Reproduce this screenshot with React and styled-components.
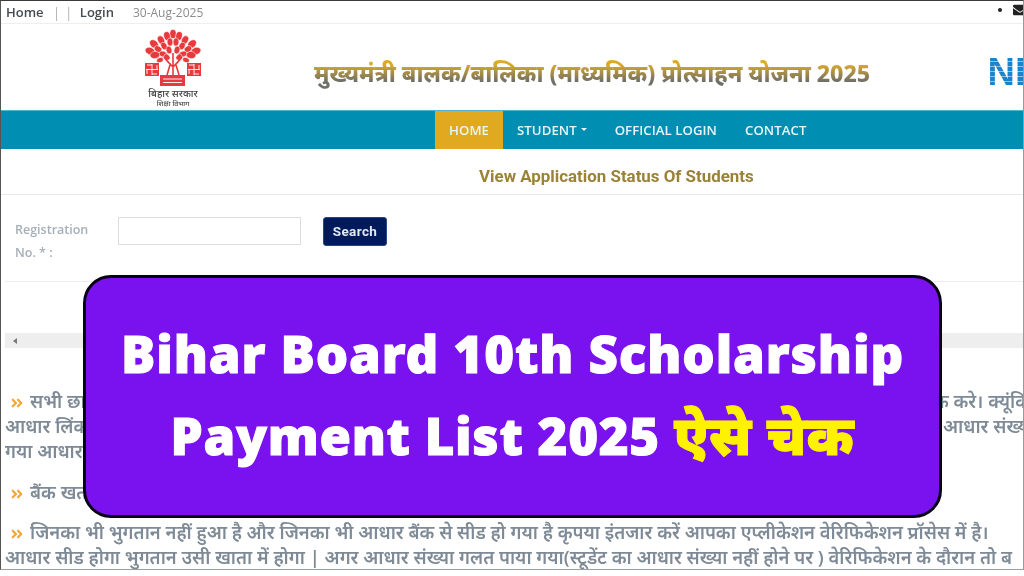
import React from 'react';
import styled, { createGlobalStyle } from 'styled-components';
import { FaEnvelope, FaAngleDoubleRight } from 'react-icons/fa';

const Global = createGlobalStyle`
  html, body { margin: 0; padding: 0; background: #fff; }
  body { width: 1024px; height: 576px; overflow: hidden; font-family: "Open Sans", "Noto Sans", sans-serif; }
`;

const Stage = styled.div`
  position: relative;
  width: 1024px;
  height: 576px;
  overflow: hidden;
`;

const Page = styled.div`
  box-sizing: border-box;
  width: 1024px;
  height: 570px;
  border-top: 1px solid #3a3a3a;
  border-left: 1px solid #555;
  border-right: 1px solid #999;
  border-bottom: 1px solid #9aa0a4;
  overflow: hidden;
  filter: blur(0.35px);
`;

const TopBar = styled.div`
  display: flex;
  align-items: center;
  height: 22px;
  padding-left: 5px;
  border-bottom: 1px solid #eee;
  font-size: 13px;
`;

const TopLink = styled.span`
  font-weight: 600;
  color: #444c52;
`;

const Pipes = styled.span`
  margin: 0 3px 0 9px;
  font-size: 15px;
  font-weight: 300;
  letter-spacing: 4px;
  color: #8f989e;
`;

const DateText = styled.span`
  margin-left: 19px;
  font-size: 12px;
  color: #8c8c8c;
`;

const TopIcons = styled.div`
  display: flex;
  align-items: center;
  gap: 11px;
  margin: -4px -4px 0 auto;
  color: #222;
`;

const Dot = styled.span`
  width: 4px;
  height: 4px;
  border-radius: 50%;
  background: #222;
`;

const Header = styled.div`
  display: flex;
  box-sizing: border-box;
  height: 86px;
  padding-top: 5px;
`;

const LogoBox = styled.div`
  display: flex;
  flex-direction: column;
  align-items: center;
  width: 56px;
  margin-left: 144px;
`;

const LogoLine = styled.span`
  font-family: "Noto Sans", sans-serif;
  font-size: ${p => p.$size}px;
  line-height: ${p => p.$size + 2}px;
  font-weight: 500;
  color: #444;
  white-space: nowrap;
`;

const Scheme = styled.h1`
  align-self: flex-start;
  margin: 27px 0 0 113px;
  width: 640px;
  font-family: "Noto Sans", sans-serif;
  font-size: 23.15px;
  line-height: 34px;
  font-weight: 800;
  white-space: nowrap;
  color: transparent;
  background: linear-gradient(180deg, #dcaa28 25%, #6f6f68 75%);
  -webkit-background-clip: text;
  background-clip: text;
`;

const Nic = styled.span`
  margin: 28px -30px 0 auto;
  font-family: "Liberation Sans", sans-serif;
  font-size: 38px;
  font-weight: 700;
  line-height: 30px;
  height: 30px;
  color: transparent;
  background: repeating-linear-gradient(180deg, #1d83c8 0 4px, #8cc4e8 4px 5px);
  -webkit-background-clip: text;
  background-clip: text;
`;

const Nav = styled.nav`
  display: flex;
  height: 38px;
  padding-left: 434px;
  background: #008fb3;
  border-top: 1px solid #4db5cf;
`;

const NavItem = styled.a`
  display: flex;
  align-items: center;
  gap: 4px;
  padding: 0 14px;
  font-size: 13.2px;
  font-weight: 600;
  letter-spacing: 0.05px;
  color: #e6f6fa;
  background: ${p => (p.$active ? '#e0a91f' : 'transparent')};
`;

const Caret = styled.span`
  width: 0;
  height: 0;
  margin-bottom: 2px;
  border-left: 3.5px solid transparent;
  border-right: 3.5px solid transparent;
  border-top: 3.5px solid #e6f6fa;
`;

const TitleRow = styled.div`
  display: flex;
  align-items: center;
  box-sizing: border-box;
  height: 46px;
  padding: 8px 0 0 478px;
  border-bottom: 1px solid #e8e8e8;
  font-family: "Roboto", sans-serif;
  font-size: 16.9px;
  font-weight: 700;
  color: #9a8338;
`;

const FormRow = styled.div`
  display: flex;
  align-items: flex-start;
  box-sizing: border-box;
  height: 87px;
  margin-left: 4px;
  padding: 22px 0 0 10px;
  border-bottom: 1px solid #ececec;
`;

const FieldLabel = styled.label`
  width: 103px;
  margin-top: 1px;
  font-size: 12.5px;
  font-weight: 600;
  line-height: 23px;
  color: #a6afb8;
`;

const TextInput = styled.div`
  box-sizing: border-box;
  width: 183px;
  height: 28px;
  border: 1px solid #ddd;
`;

const SearchButton = styled.button`
  width: 64px;
  height: 29px;
  margin-left: 22px;
  padding: 0 0 2px;
  border: 1px solid #2a4680;
  border-radius: 3px;
  background: #001a5c;
  color: #e4e9f2;
  font-family: "Roboto", sans-serif;
  font-size: 13.5px;
  font-weight: 700;
  letter-spacing: 0.4px;
`;

const Scrollbar = styled.div`
  display: flex;
  align-items: center;
  height: 15px;
  margin: 51px 0 0 4px;
  padding-left: 8px;
  background: #eee;
`;

const ScrollArrow = styled.span`
  width: 0;
  height: 0;
  border-top: 3.5px solid transparent;
  border-bottom: 3.5px solid transparent;
  border-right: 4px solid #777;
`;

const Notes = styled.div`
  margin-top: 40px;
  padding-left: 4px;
  font-family: "Noto Sans", sans-serif;
  font-size: 18.4px;
  font-weight: 600;
  color: #7e8a96;
`;

const Note = styled.div`
  margin-bottom: ${p => p.$gap || 0}px;
`;

const NoteLine = styled.div`
  display: flex;
  justify-content: space-between;
  height: 25px;
  line-height: 25px;
  white-space: nowrap;
  margin-right: ${p => p.$over || 0}px;
`;

const Lead = styled(FaAngleDoubleRight)`
  width: 14px;
  height: 14px;
  margin: 0 6px 0 5px;
  vertical-align: -2px;
  color: #f5a63a;
`;

const Banner = styled.div`
  position: absolute;
  left: 83px;
  top: 275px;
  box-sizing: border-box;
  width: 859px;
  height: 243px;
  display: flex;
  flex-direction: column;
  align-items: center;
  justify-content: center;
  gap: 9px;
  padding-bottom: 6px;
  background: #7a12f0;
  border: 3px solid #0a0014;
  border-radius: 28px;
`;

const BannerLine = styled.div`
  font-family: "Noto Sans", sans-serif;
  font-size: 51px;
  font-weight: 900;
  line-height: 72px;
  letter-spacing: ${p => p.$spacing}px;
  color: #fff;
  -webkit-text-stroke: 1px #fff;
  white-space: nowrap;
`;

const Highlight = styled.span`
  font-size: 54px;
  color: #fff200;
  -webkit-text-stroke: 1px #fff200;
`;

// leaves of the crown, [x, y, length, angle]
const leaves = [
  [28, 5, 9, 0], [22, 7, 9, -14], [34, 7, 9, 14], [16, 11, 9, -28], [40, 11, 9, 28],
  [9, 15, 10, -48], [47, 15, 10, 48], [5, 22, 10, -70], [51, 22, 10, 70], [10, 26, 10, -100], [46, 26, 10, 100],
  [25, 13, 8, -5], [31, 13, 8, 5], [19, 17, 8, -30], [37, 17, 8, 30], [13, 20, 8, -60], [43, 20, 8, 60],
  [18, 25, 8, -75], [38, 25, 8, 75], [24, 21, 8, -15], [32, 21, 8, 15], [15, 31, 7, -110], [41, 31, 7, 110],
  [22, 28, 7, -45], [34, 28, 7, 45],
];

const Emblem = () => (
  <svg width="56" height="58" viewBox="0 0 56 58">
    <g fill="#e8393c" stroke="#fff" strokeWidth="0.5">
      {leaves.map(([x, y, l, a], i) => (
        <ellipse key={i} cx={x} cy={y} rx={l * 0.36} ry={l / 2} transform={`rotate(${a} ${x} ${y})`} />
      ))}
    </g>
    <path d="M28 46V24M28 38C24 34 21 31 19 28M28 38C32 34 35 31 37 28M22 46L25 36M34 46L31 36" stroke="#e8393c" strokeWidth="1.6" fill="none" />
    <g fill="#e8393c">
      <rect x="0" y="34" width="14" height="13" />
      <rect x="42" y="34" width="14" height="13" />
      <rect x="15" y="46" width="25" height="11" />
    </g>
    <path d="M7 35v11M1 40.5h12M2 36h5M12 45H7M2 45v-4.5M12 36v4.5M49 35v11M43 40.5h12M44 36h5M54 45h-5M44 45v-4.5M54 36v4.5M18 50h19M18 53.5h19" stroke="#fff" strokeWidth="0.9" fill="none" />
  </svg>
);

export default function App() {
  return (
    <Stage>
      <Global />
      <Page>
        <TopBar>
          <TopLink>Home</TopLink>
          <Pipes>||</Pipes>
          <TopLink>Login</TopLink>
          <DateText>30-Aug-2025</DateText>
          <TopIcons>
            <Dot />
            <FaEnvelope size={14} />
          </TopIcons>
        </TopBar>
        <Header>
          <LogoBox>
            <Emblem />
            <LogoLine $size={10}>बिहार सरकार</LogoLine>
            <LogoLine $size={7}>शिक्षा विभाग</LogoLine>
          </LogoBox>
          <Scheme>मुख्यमंत्री बालक/बालिका (माध्यमिक) प्रोत्साहन योजना 2025</Scheme>
          <Nic>NIC</Nic>
        </Header>
        <Nav>
          <NavItem $active>HOME</NavItem>
          <NavItem>STUDENT<Caret /></NavItem>
          <NavItem>OFFICIAL LOGIN</NavItem>
          <NavItem>CONTACT</NavItem>
        </Nav>
        <TitleRow>View Application Status Of Students</TitleRow>
        <FormRow>
          <FieldLabel>Registration<br />No. * :</FieldLabel>
          <TextInput />
          <SearchButton>Search</SearchButton>
        </FormRow>
        <Scrollbar><ScrollArrow /></Scrollbar>
        <Notes>
          <Note $gap={16}>
            <NoteLine $over={-7}>
              <span><Lead />सभी छात्र</span>
              <span>क करे। क्यूंकि</span>
            </NoteLine>
            <NoteLine $over={-11}>
              <span>आधार लिंक</span>
              <span>आधार संख्या</span>
            </NoteLine>
            <NoteLine><span>गया आधार</span></NoteLine>
          </Note>
          <Note $gap={15}>
            <NoteLine><span><Lead />बैंक खता</span></NoteLine>
          </Note>
          <Note>
            <NoteLine>
              <span><Lead />जिनका भी भुगतान नहीं हुआ है और जिनका भी आधार बैंक से सीड हो गया है कृपया इंतजार करें आपका एप्लीकेशन वेरिफिकेशन प्रॉसेस में है।</span>
            </NoteLine>
            <NoteLine>
              <span>आधार सीड होगा भुगतान उसी खाता में होगा | अगर आधार संख्या गलत पाया गया(स्टूडेंट का आधार संख्या नहीं होने पर ) वेरिफिकेशन के दौरान तो ब</span>
            </NoteLine>
          </Note>
        </Notes>
      </Page>
      <Banner>
        <BannerLine $spacing={0.9}>Bihar Board 10th Scholarship</BannerLine>
        <BannerLine $spacing={0.7}>Payment List 2025 <Highlight>ऐसे चेक</Highlight></BannerLine>
      </Banner>
    </Stage>
  );
}
